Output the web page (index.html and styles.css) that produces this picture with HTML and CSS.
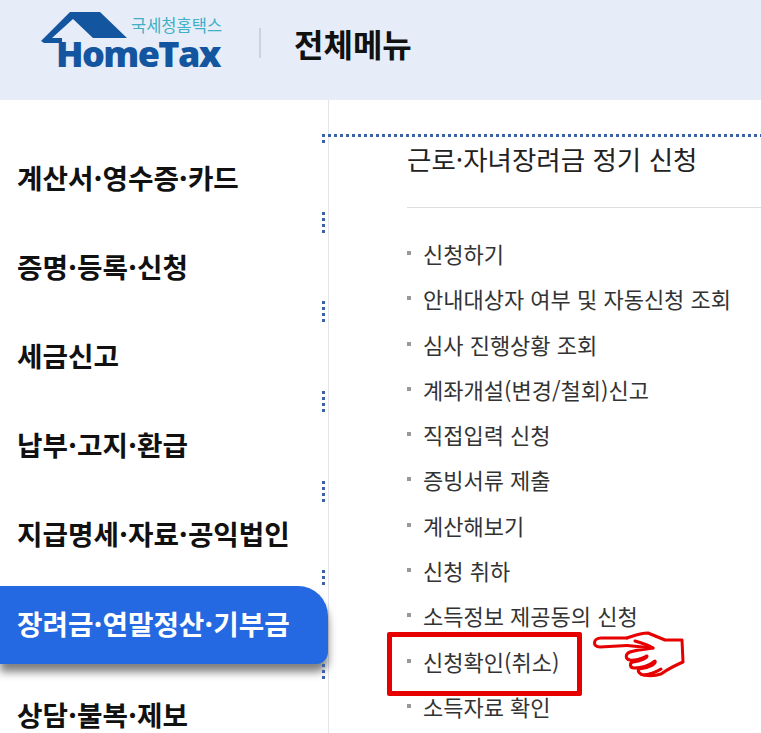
FILE: index.html
```html
<!DOCTYPE html>
<html lang="ko">
<head>
    <meta charset="UTF-8">
    <meta name="viewport" content="width=device-width, initial-scale=1.0">
    <title>전체메뉴</title>
    <link rel="stylesheet" href="styles.css">
</head>
<body>
    <header class="top">
        <div class="logo">
            <svg class="logo-roof" width="90" height="34" viewBox="0 0 90 34">
                <path d="M0 29L29 0H59L86 26H52L32 7L11 26H21V31H3Z" fill="#14559f"/>
            </svg>
            <span class="logo-ko">국세청홈택스</span>
            <span class="logo-en">HomeTax</span>
        </div>
        <h1 class="top-title">전체메뉴</h1>
    </header>

    <main class="menu">
        <nav class="side">
            <a class="side-item">계산서·영수증·카드</a>
            <a class="side-item">증명·등록·신청</a>
            <a class="side-item">세금신고</a>
            <a class="side-item">납부·고지·환급</a>
            <a class="side-item">지급명세·자료·공익법인</a>
            <a class="side-item active">장려금·연말정산·기부금</a>
            <a class="side-item">상담·불복·제보</a>
        </nav>

        <section class="sub">
            <h2 class="sub-title">근로·자녀장려금 정기 신청</h2>
            <ul class="sub-list">
                <li>신청하기</li>
                <li>안내대상자 여부 및 자동신청 조회</li>
                <li>심사 진행상황 조회</li>
                <li>계좌개설(변경/철회)신고</li>
                <li>직접입력 신청</li>
                <li>증빙서류 제출</li>
                <li>계산해보기</li>
                <li>신청 취하</li>
                <li>소득정보 제공동의 신청</li>
                <li>신청확인(취소)</li>
                <li>소득자료 확인</li>
            </ul>
        </section>

        <!-- 포커스 점선 -->
        <i class="dots dots-h"></i>
        <i class="dots dots-v d1"></i>
        <i class="dots dots-v d2"></i>
        <i class="dots dots-v d3"></i>
        <i class="dots dots-v d4"></i>
        <i class="dots dots-v d5"></i>
        <i class="dots dots-v d6"></i>
        <i class="dots dots-v d7"></i>

        <!-- 빨간 표시 -->
        <div class="red-box"></div>
        <svg class="hand" width="100" height="60" viewBox="0 0 100 60" fill="none" stroke="#e60000" stroke-width="3" stroke-linejoin="round" stroke-linecap="round">
            <path d="M37 13H11C3 13 2 22 10 22L37 20.500"/>
            <path d="M37 13C43 11 50 8 58 8L75 15H92L93 37C86 40 78 44 71 49C65 51 59 51 54 50"/>
            <path d="M37 20.500L63 23C55 24 45 25 40 27C35 29 35 34 40 35C46 36 52 33 57 31C58 33 50 36 43 37C39 38 40 43 44 43C52 43 60 40 65 36C67 38 60 43 49 44C47 46 50 50 54 50C60 50 68 46 71 44"/>
            <path d="M45 16C52 18 58 20 63 23"/>
        </svg>
    </main>
</body>
</html>
```

FILE: styles.css
```css
* {
    box-sizing: border-box;
}

body {
    margin: 0;
    height: 733px;
    overflow: hidden;
    background: #fff;
    font-family: "Noto Sans CJK KR", "Noto Sans", sans-serif;
    color: #111;
}

/* 상단 */
.top {
    display: flex;
    align-items: center;
    height: 100px;
    padding-left: 41px;
    background: #e6edf8;
}

.logo {
    position: relative;
    width: 182px;
    height: 60px;
    margin-top: -16px;
}
.logo-roof {
    position: absolute;
    left: 0;
    top: 0;
}
.logo-ko {
    position: absolute;
    left: 90px;
    top: 4px;
    font-size: 16.500px;
    line-height: 18px;
    color: #3fb0c6;
    white-space: nowrap;
}
.logo-en {
    position: absolute;
    left: 15px;
    top: 27px;
    font-family: "Open Sans", sans-serif;
    font-weight: 800;
    font-size: 36px;
    line-height: 30px;
    letter-spacing: -1.600px;
    color: #14559f;
}

.top-title {
    display: flex;
    align-items: center;
    height: 30px;
    margin: -15px 0 0 36px;
    padding-left: 33px;
    border-left: 2px solid #cdd3dc;
    font-size: 32px;
    line-height: 32px;
    font-weight: 700;
}

/* 본문 */
.menu {
    position: relative;
    display: flex;
    height: 633px;
}

.side {
    flex: none;
    width: 329px;
    height: 100%;
    padding-top: 32px;
    border-right: 1px solid #e2e5ea;
}
.side-item {
    display: flex;
    align-items: center;
    width: 328px;
    height: 89.200px;
    padding-left: 17px;
    font-size: 27.700px;
    font-weight: 700;
    white-space: nowrap;
}
.side-item.active {
    height: 78px;
    margin: 7.600px 0 5.600px;
    padding-bottom: 3px;
    border-radius: 0 30px 12px 0;
    background: #2569e2;
    color: #fff;
    box-shadow: 0 8px 8px rgba(0, 0, 0, 0.5);
}

.sub {
    flex: 1;
    padding: 41px 0 0 78px;
    min-width: 0;
}
.sub-title {
    margin: 0;
    height: 67px;
    border-bottom: 1px solid #dcdee2;
    font-size: 26.500px;
    line-height: 36px;
    font-weight: 400;
    color: #222;
    white-space: nowrap;
}
.sub-list {
    margin: 0;
    padding: 23px 0 0;
    list-style: none;
}
.sub-list li {
    position: relative;
    height: 45.300px;
    padding-left: 16px;
    font-size: 22px;
    line-height: 45px;
    color: #333;
    white-space: nowrap;
}
.sub-list li::before {
    content: "";
    position: absolute;
    left: 0;
    top: 20px;
    width: 4px;
    height: 4px;
    background: #999;
}

/* 점선 */
.dots {
    position: absolute;
}
.dots-h {
    left: 322px;
    top: 34px;
    right: 0;
    height: 3px;
    background: repeating-linear-gradient(90deg, #3a62a5 0 3px, transparent 3px 6px);
}
.dots-v {
    left: 322px;
    width: 3px;
    background: repeating-linear-gradient(180deg, #3a62a5 0 3px, transparent 3px 6px);
}
.d1 { top: 34px; height: 12px; }
.d2 { top: 112px; height: 21px; }
.d3 { top: 201px; height: 21px; }
.d4 { top: 291px; height: 21px; }
.d5 { top: 381px; height: 21px; }
.d6 { top: 470px; height: 18px; }
.d7 { top: 564px; height: 18px; }

/* 표시 */
.red-box {
    position: absolute;
    left: 387px;
    top: 532px;
    width: 195px;
    height: 64px;
    border: 5px solid #e60000;
    border-radius: 2px;
}
.hand {
    position: absolute;
    left: 590px;
    top: 525px;
}
```
